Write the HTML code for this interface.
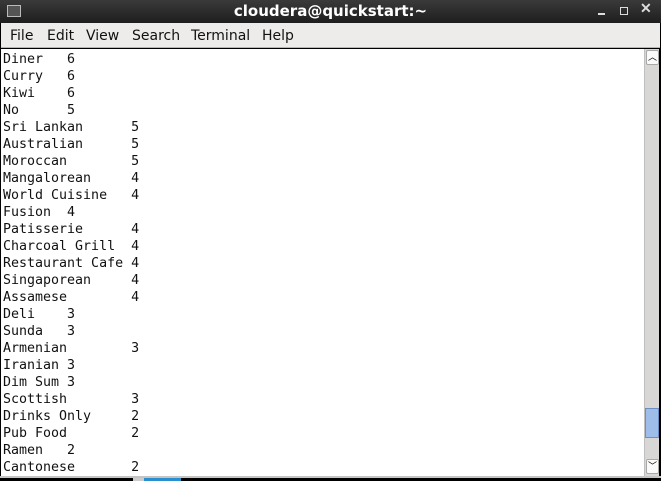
<!DOCTYPE html>
<html><head><meta charset="utf-8"><style>
*{margin:0;padding:0;box-sizing:border-box}
html,body{width:661px;height:481px;overflow:hidden;background:#000}
#title{position:absolute;left:0;top:0;width:661px;height:23px;background:linear-gradient(#3a3a3a,#1e1e1e);color:#fff;font:bold 15px "DejaVu Sans","Liberation Sans",sans-serif;text-align:center;line-height:23px}
#menu{position:absolute;left:1px;top:23px;width:659px;height:25px;background:#edecea;border-bottom:1px solid #b8b6b2;font:14px "DejaVu Sans","Liberation Sans",sans-serif;color:#111;line-height:27px}
#menu span{position:absolute;top:0}
#term{position:absolute;left:1px;top:49px;width:643px;height:427px;background:#fff}
pre{position:absolute;left:3px;top:51px;font:13.3px/17px "DejaVu Sans Mono","Liberation Mono",monospace;color:#111}
#sb{position:absolute;left:644px;top:49px;width:15px;height:427px;background:#d8d7d5;border-left:1px solid #c0bfbd}
.btn{position:absolute;left:1px;width:13px;height:15px;background:#fafafa;border:1px solid #a9a8a6;border-radius:2px}
#thumb{position:absolute;left:0;top:359px;width:14px;height:30px;background:#9ebde9;border:1px solid #6d90c4}
#bottom{position:absolute;left:0;top:476px;width:661px;height:2px;background:#c6c5c3}
</style></head><body>
<div id="title">cloudera@quickstart:~
<div style="position:absolute;left:7px;top:5px;width:14px;height:12px;border:1px solid #bbb;background:#555"></div>
<div style="position:absolute;left:598px;top:13px;width:7px;height:2px;background:#ddd"></div>
<div style="position:absolute;left:620px;top:7px;width:8px;height:8px;border:1.5px solid #ddd"></div>
<div style="position:absolute;left:640px;top:0;font:bold 14px sans-serif;color:#ddd">✕</div>
</div>
<div id="menu"><span style="left:9px">File</span><span style="left:46px">Edit</span><span style="left:85px">View</span><span style="left:131px">Search</span><span style="left:190px">Terminal</span><span style="left:261px">Help</span></div>
<div id="term"></div>
<pre>Diner   6
Curry   6
Kiwi    6
No      5
Sri Lankan      5
Australian      5
Moroccan        5
Mangalorean     4
World Cuisine   4
Fusion  4
Patisserie      4
Charcoal Grill  4
Restaurant Cafe 4
Singaporean     4
Assamese        4
Deli    3
Sunda   3
Armenian        3
Iranian 3
Dim Sum 3
Scottish        3
Drinks Only     2
Pub Food        2
Ramen   2
Cantonese       2</pre>
<div id="sb">
<div class="btn" style="top:1px;font:9px sans-serif;text-align:center;line-height:13px">︿</div>
<div id="thumb"></div>
<div class="btn" style="top:410px;font:9px sans-serif;text-align:center;line-height:13px">﹀</div>
</div>
<div id="bottom"></div>
<div style="position:absolute;left:133px;top:478px;width:11px;height:3px;background:#ccc"></div>
<div style="position:absolute;left:144px;top:478px;width:37px;height:3px;background:#2a8fd0"></div>
</body></html>
